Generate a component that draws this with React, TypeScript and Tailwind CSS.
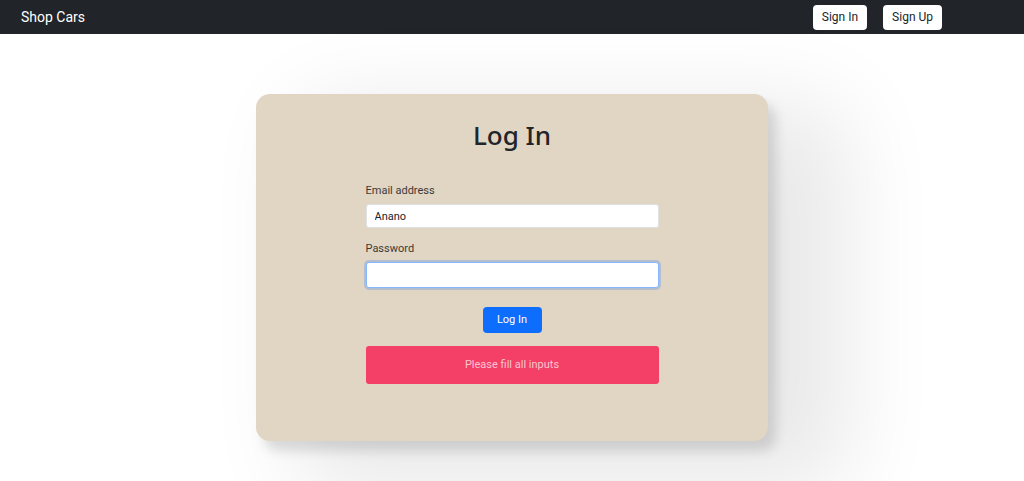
import React from "react";

const font = { fontFamily: 'Roboto, "Noto Sans", sans-serif' };

const Navbar: React.FC = () => {
  return (
    <nav className="flex h-[34px] items-center justify-between bg-[#212529] pl-[21px] pr-[82px]">
      <span className="text-[14px] text-white">Shop Cars</span>
      <div className="flex gap-4">
        <button className="h-[25px] rounded bg-white px-[9px] text-[12px] text-[#212529]">
          Sign In
        </button>
        <button className="h-[25px] rounded bg-white px-[9px] text-[12px] text-[#212529]">
          Sign Up
        </button>
      </div>
    </nav>
  );
};

const LoginCard: React.FC = () => {
  return (
    <div className="mx-auto mt-[60px] flex w-[512px] flex-col items-center rounded-[14px] bg-[#e1d5c4] pb-[57px] pt-[18px] shadow-[8px_10px_12px_rgba(0,0,0,0.13),60px_30px_90px_20px_rgba(0,0,0,0.09)]">
      <h1 className="font-['Noto_Sans',sans-serif] text-[26px] font-medium leading-[46px] text-[#212529]">
        Log In
      </h1>
      <form className="mt-[25px] flex w-[293px] flex-col" onSubmit={(e) => e.preventDefault()}>
        <label className="mb-[5px] text-[11px] leading-[16px] text-[#3d3a36]">Email address</label>
        <input
          defaultValue="Anano"
          className="h-[24px] rounded-[3px] border border-[#dee2e6] bg-white px-[8px] text-[11px] text-[#212529] outline-none"
        />
        <label className="mb-[5px] mt-[13px] text-[11px] leading-[16px] text-[#3d3a36]">Password</label>
        <input
          type="password"
          autoFocus
          className="h-[26px] rounded-[3px] border border-[#86b7fe] bg-white px-[8px] text-[11px] text-[#212529] shadow-[0_0_0_2px_rgba(160,180,210,0.7)] outline-none"
        />
        <button className="mx-auto mt-[19px] h-[26px] w-[59px] rounded-[4px] bg-[#0d6efd] text-[11px] text-white">
          Log In
        </button>
        <div className="mt-[13px] flex h-[38px] items-center justify-center rounded-[3px] bg-[#f43f66] text-[11px] text-[#fbc4d0]">
          Please fill all inputs
        </div>
      </form>
    </div>
  );
};

export default function App() {
  return (
    <div className="min-h-[481px] bg-white" style={font}>
      <Navbar />
      <LoginCard />
    </div>
  );
}
